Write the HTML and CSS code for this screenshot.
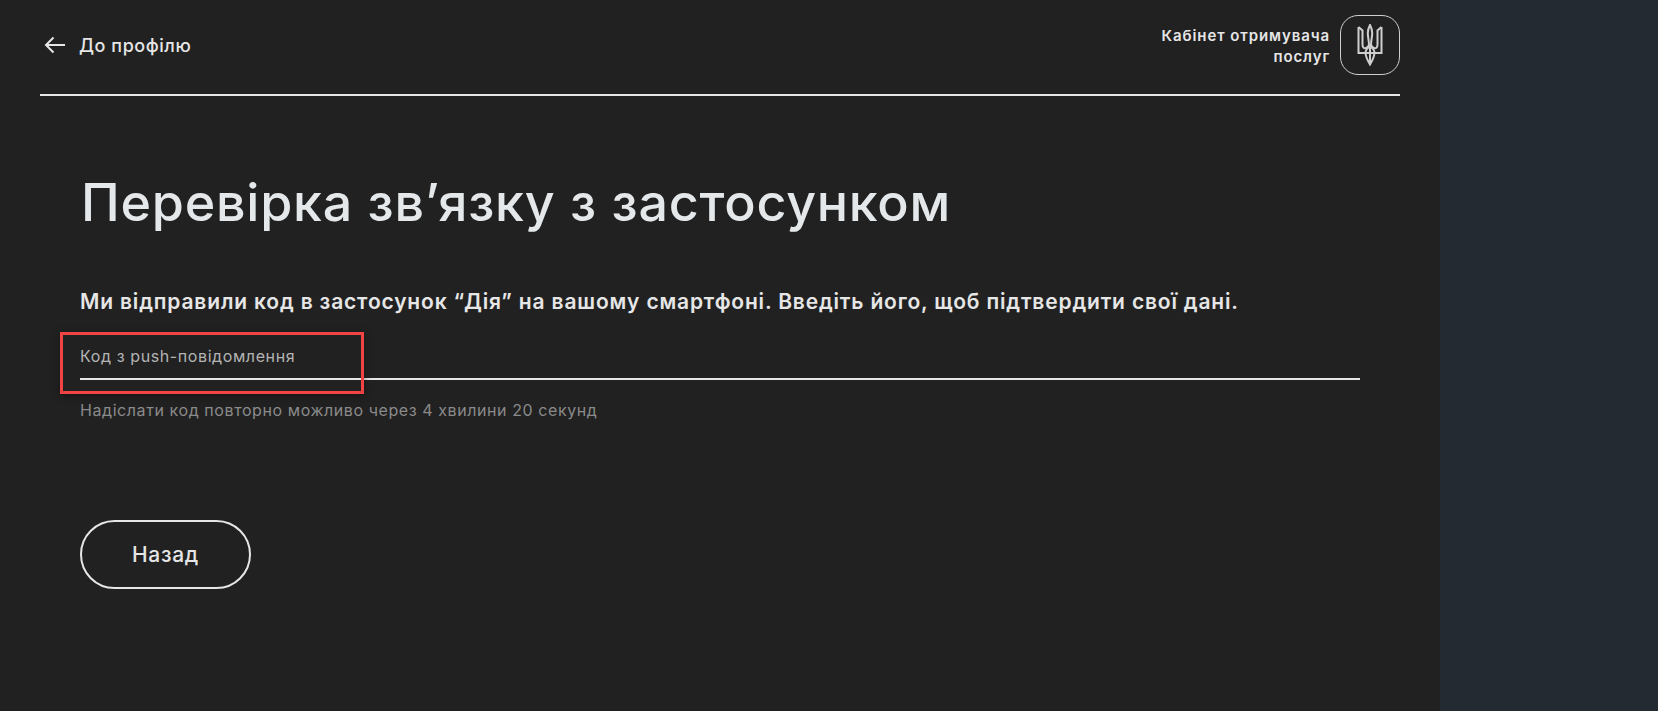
FILE: index.html
```html
<!DOCTYPE html>
<html lang="uk">
<head>
    <meta charset="UTF-8">
    <meta name="viewport" content="width=device-width, initial-scale=1.0">
    <title>Перевірка зв’язку з застосунком</title>
    <link rel="stylesheet" href="styles.css">
</head>
<body>

<div class="page">
    <div class="main">
        <!-- Top bar -->
        <div class="top-bar">
            <a href="#" class="back">
                <svg class="back-icon" width="22" height="18" viewBox="0 0 22 18" fill="none" stroke="#e6e6e6" stroke-width="2">
                    <path d="M21 9H2M9.500 1.500L2 9l7.500 7.500"/>
                </svg>
                <span>До профілю</span>
            </a>
            <div class="cabinet">
                <div class="cabinet-name">Кабінет отримувача<br>послуг</div>
                <div class="logo">
                    <svg width="26" height="42" viewBox="0 0 26 42" fill="none" stroke="#cfcfcf" stroke-width="2">
                        <path d="M13 1c-1.600 3-2.200 5-2.200 8 0 4 1.200 8 1.200 12h2c0-4 1.200-8 1.200-12 0-3-.6-5-2.200-8z"/>
                        <path d="M1.500 3l4 3.500v14c0 3 1.500 4 3 3.800 1.800-.3 3-1.800 3.500-3.800M24.500 3l-4 3.500v14c0 3-1.500 4-3 3.800-1.800-.3-3-1.800-3.500-3.800"/>
                        <path d="M1.500 3v26h7.500M24.500 3v26h-7.500"/>
                        <path d="M8.500 29c.2 4 2.400 8 4.500 11.500 2.100-3.500 4.300-7.500 4.500-11.500.1-2.800-2-5-4.500-6.500-2.500 1.500-4.600 3.700-4.500 6.500zM13 23v17M7 29h12"/>
                    </svg>
                </div>
            </div>
        </div>

        <div class="content">
            <h1>Перевірка зв’язку з застосунком</h1>
            <p class="lead">Ми відправили код в застосунок “Дія” на вашому смартфоні. Введіть його, щоб підтвердити свої дані.</p>

            <div class="field">
                <label class="field-label">Код з push-повідомлення</label>
            </div>
            <p class="hint">Надіслати код повторно можливо через 4 хвилини 20 секунд</p>

            <button class="btn-back">Назад</button>
        </div>

        <!-- Annotation over the field -->
        <div class="highlight"></div>
    </div>
    <div class="side"></div>
</div>

</body>
</html>
```

FILE: styles.css
```css
* {
    margin: 0;
    padding: 0;
    box-sizing: border-box;
}

body {
    font-family: Inter, "Noto Sans", sans-serif;
    background-color: #212121;
    color: #e6e6e6;
}

.page {
    display: flex;
    height: 711px;
    overflow: hidden;
}

.main {
    position: relative;
    width: 1440px;
    padding: 0 40px;
    background-color: #212121;
}

.side {
    flex: 1;
    background-color: #232a32;
}

/* Top bar */
.top-bar {
    height: 96px;
    padding-bottom: 4px;
    border-bottom: 2px solid #e6e6e6;
    display: flex;
    justify-content: space-between;
    align-items: center;
}

.back {
    display: flex;
    align-items: center;
    gap: 13px;
    color: #e6e6e6;
    text-decoration: none;
    font-size: 18px;
    font-weight: 500;
    letter-spacing: 0.55px;
}

.back-icon {
    margin-left: 4px;
}

.cabinet {
    display: flex;
    align-items: center;
    gap: 10px;
}

.cabinet-name {
    margin-top: 2px;
    text-align: right;
    font-size: 15px;
    font-weight: 600;
    line-height: 21px;
    letter-spacing: 0.9px;
}

.logo {
    width: 60px;
    height: 60px;
    border: 1px solid #cfcfcf;
    border-radius: 18px;
    display: flex;
    align-items: center;
    justify-content: center;
}

/* Form */
.content {
    padding: 77px 40px 0;
}

h1 {
    margin-left: 1px;
    font-size: 52px;
    font-weight: 500;
    line-height: 60px;
    letter-spacing: 0.75px;
    color: #e4e8ea;
}

.lead {
    margin-top: 54px;
    font-size: 21px;
    font-weight: 600;
    line-height: 30px;
    letter-spacing: 0.83px;
}

.field {
    margin-top: 18px;
    height: 45px;
    border-bottom: 2px solid #e6e6e6;
}

.field-label {
    display: block;
    padding-top: 11px;
    font-size: 16px;
    letter-spacing: 0.6px;
    color: #b4b4b4;
}

.hint {
    margin-top: 20px;
    font-size: 16px;
    letter-spacing: 0.58px;
    color: #8a8a8a;
}

.btn-back {
    display: block;
    margin-top: 100px;
    width: 171px;
    height: 69px;
    border: 2px solid #e6e6e6;
    border-radius: 35px;
    background: none;
    color: #e6e6e6;
    font-family: inherit;
    font-size: 21px;
    font-weight: 500;
    letter-spacing: 0.7px;
}

.highlight {
    position: absolute;
    left: 60px;
    top: 332px;
    width: 304px;
    height: 62px;
    border: 3px solid #f04444;
    box-shadow: 0 2px 8px rgba(0, 0, 0, 0.4);
}
```
